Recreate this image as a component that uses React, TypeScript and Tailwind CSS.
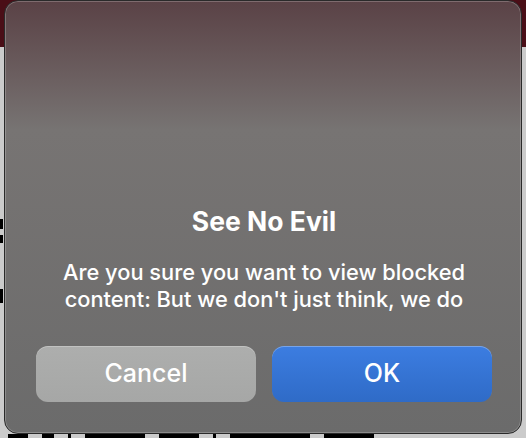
export default function App() {
  return (
    <div className="relative w-[526px] h-[438px] overflow-hidden bg-[#cbcbcb] font-['Inter','Liberation_Sans',sans-serif]">
      {/* page behind the alert, only its edges show */}
      <div className="h-[47px] bg-[#4a0e17]" />
      <div className="flex flex-col gap-[6px] pt-[172px]">
        <div className="w-[3px] h-[10px] bg-black" />
        <div className="w-[3px] h-[8px] bg-black" />
        <div className="mt-[40px] w-[3px] h-[14px] bg-black" />
      </div>
      <div className="mt-[131px] flex gap-[14px] pl-[8px]">
        <div className="w-[20px] h-[4px] bg-black" />
        <div className="w-[12px] h-[4px] bg-black" />
        <div className="w-[3px] h-[4px] bg-black" />
        <div className="w-[60px] h-[4px] bg-black" />
        <div className="w-[40px] h-[4px] bg-black" />
        <div className="w-[3px] h-[4px] bg-black" />
        <div className="w-[80px] h-[4px] bg-black" />
        <div className="w-[50px] h-[4px] bg-black" />
      </div>

      {/* alert */}
      <div className="absolute left-[4px] top-0 w-[518px] h-[434px] rounded-[14px] border border-[#2a2a2a] bg-gradient-to-b from-[#5a4246] via-[#777473] via-30% to-[#6b6b6b] shadow-[inset_0_0_0_1px_rgba(255,255,255,0.22)] flex flex-col justify-end items-center pl-[31px] pr-[29px] pb-[31px] text-white">
        <div className="text-[26.5px] leading-[30px] font-bold">See No Evil</div>
        <div className="mt-[23px] text-[21.8px] leading-[27px] font-medium text-center">
          Are you sure you want to view blocked
          <br />
          content: But we don't just think, we do
        </div>
        <div className="mt-[33px] flex w-full gap-[16px]">
          <button className="flex-1 h-[56px] rounded-[12px] bg-gradient-to-b from-[#adaead] to-[#a6a7a6] shadow-[inset_0_1px_0_rgba(255,255,255,0.25)] text-[25px] font-medium text-white">
            Cancel
          </button>
          <button className="flex-1 h-[56px] rounded-[12px] bg-gradient-to-b from-[#3c7de1] to-[#2f6bc7] shadow-[inset_0_1px_0_rgba(255,255,255,0.3)] text-[25px] font-medium text-white">
            OK
          </button>
        </div>
      </div>
    </div>
  )
}
